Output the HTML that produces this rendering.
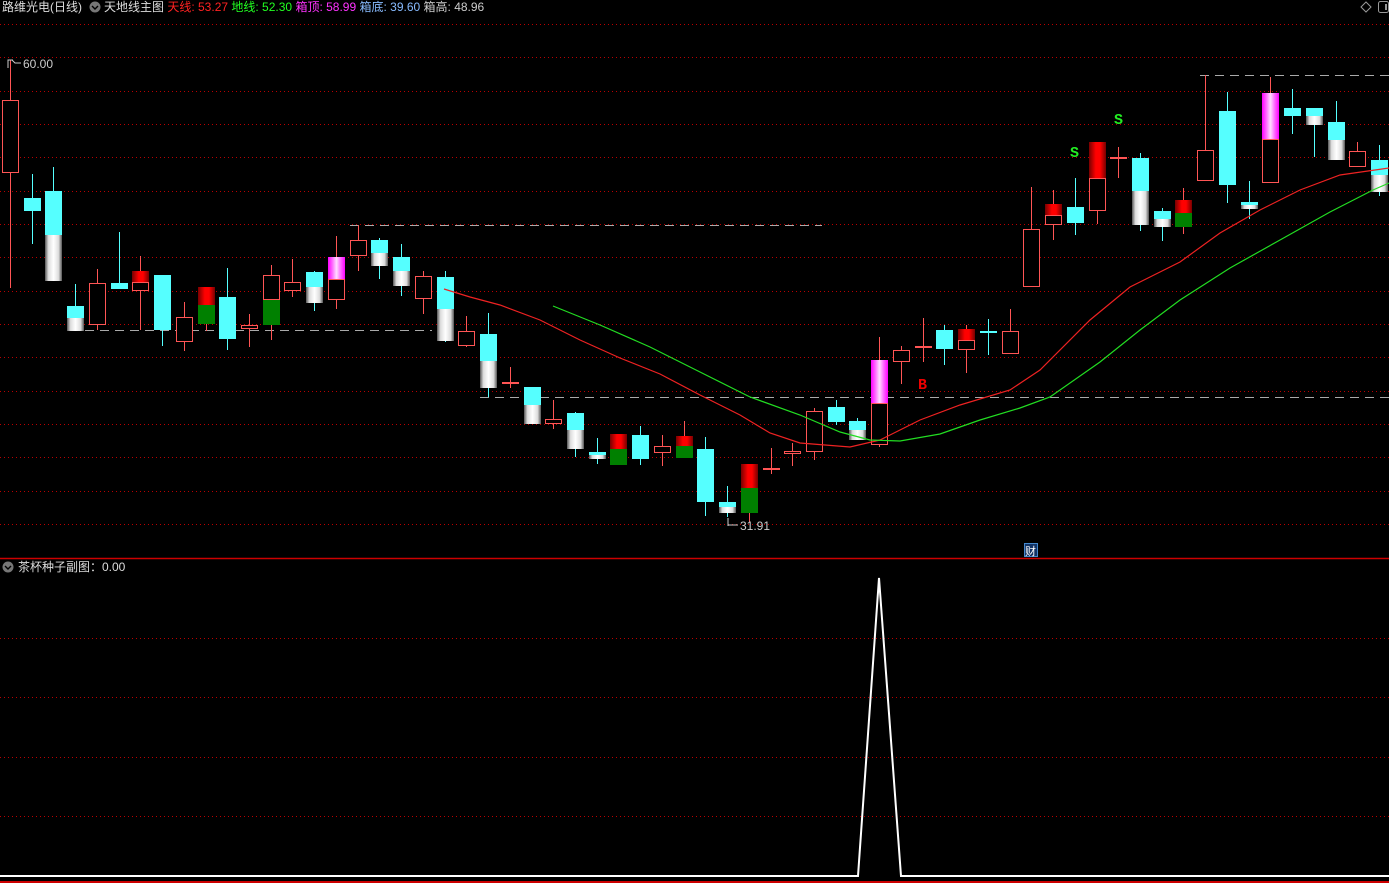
<!DOCTYPE html>
<html><head><meta charset="utf-8"><style>
html,body{margin:0;padding:0;background:#000;width:1389px;height:883px;overflow:hidden}
.t{position:absolute;font-family:"Liberation Sans","Noto Sans CJK SC",sans-serif;font-size:12px;white-space:nowrap;line-height:14px}
</style></head><body>
<svg id="s" width="1389" height="883" style="position:absolute;left:0;top:0" xmlns="http://www.w3.org/2000/svg">
<defs>
<linearGradient id="gr" x1="0" x2="1"><stop offset="0" stop-color="#700"/><stop offset="0.4" stop-color="#f00"/><stop offset="0.65" stop-color="#f00"/><stop offset="1" stop-color="#700"/></linearGradient>
<linearGradient id="gw" x1="0" x2="1"><stop offset="0" stop-color="#555"/><stop offset="0.2" stop-color="#ddd"/><stop offset="0.5" stop-color="#fff"/><stop offset="0.8" stop-color="#ddd"/><stop offset="1" stop-color="#555"/></linearGradient>
<linearGradient id="gm" x1="0" x2="1"><stop offset="0" stop-color="#f0f"/><stop offset="0.25" stop-color="#f6f"/><stop offset="0.5" stop-color="#fdf"/><stop offset="0.75" stop-color="#f6f"/><stop offset="1" stop-color="#f0f"/></linearGradient>
</defs>
<g id="grid" stroke="#b00" stroke-width="1" stroke-dasharray="1 3"></g>
<line x1="0" y1="558.5" x2="1389" y2="558.5" stroke="#c00" stroke-width="1.5"/>
<line x1="0" y1="882" x2="1389" y2="882" stroke="#c00" stroke-width="2"/>
<g stroke="#aaa" stroke-dasharray="9 6" stroke-width="1">
<line x1="350" y1="225.5" x2="822" y2="225.5"/>
<line x1="70" y1="330.5" x2="432" y2="330.5"/>
<line x1="480" y1="397.5" x2="1389" y2="397.5"/>
<line x1="1200" y1="75.5" x2="1389" y2="75.5"/>
</g>
<g id="c"></g>
<polyline fill="none" stroke="#e22" stroke-width="1.2" points="444,289 470,297 500,305 540,320 580,340 620,358 660,374 700,395 740,415 770,433 800,443 850,447 880,440 920,420 960,405 1010,390 1040,370 1090,320 1130,287 1180,262 1220,233 1260,210 1300,190 1340,175 1389,168"/>
<polyline fill="none" stroke="#2d2" stroke-width="1.2" points="553,306 600,325 650,347 700,372 750,397 800,415 840,432 870,440 900,441 940,434 980,420 1020,408 1050,397 1100,362 1140,330 1180,300 1230,268 1280,240 1330,212 1373,190 1389,183"/>
<polyline fill="none" stroke="#fff" stroke-width="2" points="0,876 858,876 879,578 901,876 1389,876"/>
<text x="1070" y="157" fill="#2e2" font-family="Liberation Mono,monospace" font-size="15" font-weight="bold">S</text>
<text x="1114" y="124" fill="#2e2" font-family="Liberation Mono,monospace" font-size="15" font-weight="bold">S</text>
<text x="918" y="389" fill="#e00" font-family="Liberation Mono,monospace" font-size="15" font-weight="bold">B</text>
<rect x="1024.5" y="543.5" width="13" height="13" fill="#136" stroke="#48c"/>
<text x="1025" y="555" fill="#fff" font-family="Noto Sans CJK SC,sans-serif" font-size="11">财</text>
<path d="M8 68 V60 H13 M12 60 l3 3 h6" stroke="#ccc" fill="none"/>
<path d="M728 518 V526 M728 525 H738" stroke="#ccc" fill="none"/>
<path d="M1366 2 l5 5 -5 5 -5 -5z" stroke="#999" fill="none"/>
<rect x="1378.5" y="1.5" width="10" height="11" rx="2" stroke="#999" fill="none"/>
<rect x="1385" y="4" width="2" height="6" fill="#999"/>
<circle cx="95" cy="7" r="5.5" fill="#777"/><path d="M92 6 l3 3 3 -3" stroke="#000" stroke-width="1.4" fill="none"/>
<circle cx="8" cy="567" r="5.5" fill="#777"/><path d="M5 566 l3 3 3 -3" stroke="#000" stroke-width="1.4" fill="none"/>
</svg>
<div class="t" style="left:2px;top:0px;color:#ddd">路维光电(日线)</div>
<div class="t" style="left:104px;top:0px;color:#ddd">天地线主图 <span style="color:#f22">天线: 53.27</span> <span style="color:#2f2">地线: 52.30</span> <span style="color:#f3f">箱顶: 58.99</span> <span style="color:#8bf">箱底: 39.60</span> <span style="color:#ccc">箱高: 48.96</span></div>
<div class="t" style="left:23px;top:57px;color:#ccc">60.00</div>
<div class="t" style="left:740px;top:519px;color:#ccc">31.91</div>
<div class="t" style="left:18px;top:560px;color:#ddd">茶杯种子副图：0.00</div>
<script>
var NS="http://www.w3.org/2000/svg";
function el(p,t,a){var e=document.createElementNS(NS,t);for(var k in a)e.setAttribute(k,a[k]);p.appendChild(e);return e;}
var g=document.getElementById('grid');
for(var k=0;k<16;k++){var y=Math.round(24+33.33*k)+0.5;el(g,'line',{x1:0,y1:y,x2:1389,y2:y});}
[638,697,757,816].forEach(function(y){el(g,'line',{x1:0,y1:y+0.5,x2:1389,y2:y+0.5});});
var D=[
[60,288,['h',100,173]],
[174,244,['c',198,211]],
[167,281,['c',191,235],['w',235,281]],
[284,331,['c',306,318],['w',318,331]],
[269,330,['h',283,325]],
[232,289,['c',283,289]],
[256,330,['r',271,282],['h',282,291]],
[275,346,['c',275,330]],
[302,351,['h',317,342]],
[287,331,['r',287,305],['g',305,324]],
[268,350,['c',297,339]],
[314,347,['h',325,329]],
[265,340,['h',275,300],['g',300,325]],
[259,297,['h',282,291]],
[271,311,['c',272,287],['w',287,303]],
[236,309,['m',257,279],['h',279,300]],
[225,271,['h',240,256]],
[238,279,['c',240,253],['w',253,266]],
[244,296,['c',257,271],['w',271,286]],
[271,314,['h',276,299]],
[271,342,['c',277,309],['w',309,341]],
[316,347,['h',331,346]],
[313,397,['c',334,361],['w',361,388]],
[367,388,['x',382,384]],
[387,424,['c',387,405],['w',405,424]],
[400,429,['h',419,424]],
[412,457,['c',413,430],['w',430,449]],
[438,464,['c',452,455],['w',455,459]],
[434,465,['r',434,449],['g',449,465]],
[426,465,['c',435,459]],
[435,466,['h',446,453]],
[421,458,['r',436,446],['g',446,458]],
[437,516,['c',449,502]],
[486,517,['c',502,507],['w',507,513]],
[464,522,['r',464,488],['g',488,513]],
[448,474,['x',468,470]],
[443,466,['h',451,454]],
[408,460,['h',411,452]],
[400,425,['c',407,422]],
[418,440,['c',421,430],['w',430,440]],
[337,447,['m',360,403],['h',403,445]],
[346,384,['h',350,362]],
[318,362,['x',346,348]],
[325,365,['c',330,349]],
[325,373,['r',329,340],['h',340,350]],
[319,355,['cx',331,333]],
[309,354,['h',331,354]],
[187,287,['h',229,287]],
[190,240,['r',204,215],['h',215,225]],
[178,235,['c',207,223]],
[142,224,['r',142,178],['h',178,211]],
[147,178,['h',157,159]],
[153,231,['c',158,191],['w',191,225]],
[208,241,['c',211,219],['w',219,227]],
[188,234,['r',200,213],['g',213,227]],
[75,181,['h',150,181]],
[92,203,['c',111,185]],
[181,219,['c',202,205],['w',205,209]],
[77,183,['m',93,139],['h',139,183]],
[89,134,['c',108,116]],
[108,157,['c',108,116],['w',116,125]],
[101,160,['c',122,140],['w',140,160]],
[142,167,['h',151,167]],
[145,196,['c',160,175],['w',175,192]]
];
var C=document.getElementById('c');
D.forEach(function(d,i){
 var L=Math.round(2+21.73*i),cx=L+8.5;
 var isC=d[2][0]=='c'||d[2][0]=='cx';
 el(C,'line',{x1:cx,y1:d[0],x2:cx,y2:d[1],stroke:isC?'#5ff':'#f55','stroke-width':1});
 for(var j=2;j<d.length;j++){var s=d[j],t=s[0],a=s[1],b=s[2];
  if(t=='h')el(C,'rect',{x:L+0.5,y:a+0.5,width:16,height:Math.max(b-a-1,1),fill:'#000',stroke:'#f55'});
  else if(t=='x')el(C,'rect',{x:L,y:a,width:17,height:2,fill:'#f55'});
  else if(t=='cx')el(C,'rect',{x:L,y:a,width:17,height:2,fill:'#5ff'});
  else el(C,'rect',{x:L,y:a,width:17,height:b-a,fill:t=='c'?'#55ffff':t=='g'?'#008000':t=='r'?'url(#gr)':t=='w'?'url(#gw)':'url(#gm)'});
 }
});
</script>
</body></html>
